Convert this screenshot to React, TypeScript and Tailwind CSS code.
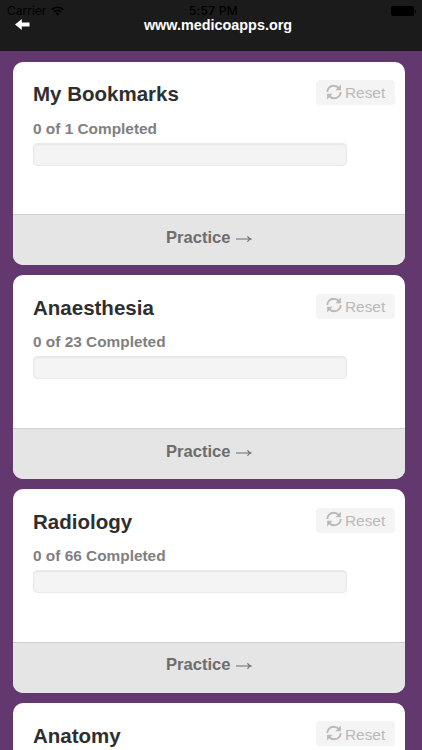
const subjects = [
  { name: 'My Bookmarks', done: 0, total: 1 },
  { name: 'Anaesthesia', done: 0, total: 23 },
  { name: 'Radiology', done: 0, total: 66 },
  { name: 'Anatomy', done: 0, total: 48 }
];

function WifiIcon() {
  return (
    <svg width="13" height="10" viewBox="0 0 13 10" fill="none" stroke="#000" strokeWidth="1.6">
      <path d="M0.7 3.6a8.2 8.2 0 0 1 11.6 0" />
      <path d="M2.9 5.9a5.1 5.1 0 0 1 7.2 0" />
      <path d="M6.5 9.6 4.4 7.5a3 3 0 0 1 4.2 0Z" fill="#000" stroke="none" />
    </svg>
  );
}

function RefreshIcon() {
  return (
    <svg width="16" height="16" viewBox="0 0 16 16" fill="none" stroke="#b9b9b9" strokeWidth="1.9" className="-mt-[2px]">
      <path d="M1.3 8C1.3 4.6 4 1.7 7.6 1.7c2.2 0 4 .9 5.3 2.5" />
      <path d="M14.7 8c0 3.4-2.7 6.3-6.3 6.3-2.2 0-4-.9-5.3-2.5" />
      <path d="M14.9 0.6v5.6H9.5Z" fill="#b9b9b9" stroke="none" />
      <path d="M1.1 15.4V9.8h5.4Z" fill="#b9b9b9" stroke="none" />
    </svg>
  );
}

function StatusBar() {
  return (
    <div className="grid h-[20px] grid-cols-3 items-center pt-[2px] pl-[7px] pr-[6px] font-['Inter',sans-serif] text-[12px] text-black">
      <div className="flex items-center gap-[5px]">
        <span>Carrier</span>
        <WifiIcon />
      </div>
      <span className="pl-[4px] text-center font-medium tracking-[0.3px]">5:57 PM</span>
      <div className="flex items-center justify-end gap-px">
        <div className="h-[10px] w-[23px] rounded-[2px] bg-black" />
        <div className="h-[3px] w-px bg-black" />
      </div>
    </div>
  );
}

function SubjectCard({ name, done, total }: { name: string; done: number; total: number }) {
  return (
    <div className="flex h-[203.8px] shrink-0 flex-col overflow-hidden rounded-[10px] bg-white">
      <div className="flex flex-1 items-start justify-between pl-[20.5px] pr-[10px]">
        <div className="pt-[19.9px]">
          <h2 className="text-[20.5px] leading-[25px] font-bold whitespace-nowrap text-[#2e2e2e]">{name}</h2>
          <p className="mt-[12.3px] text-[15.4px] leading-[20px] font-bold whitespace-nowrap text-[#808080]">
            {done} of {total} Completed
          </p>
          <div className="-mr-[60px] mt-[4px] h-[23px] w-[314px] overflow-hidden rounded-[4px] border border-[#e9e9e9] bg-[#f4f4f4] shadow-[inset_0_1px_2px_rgba(0,0,0,0.06)]">
            <div className="h-full bg-[#62386f]" style={{ width: `${(done / total) * 100}%` }} />
          </div>
        </div>
        <button
          type="button"
          className="mt-[18.5px] flex h-[25px] w-[79px] shrink-0 items-center gap-[3px] rounded-[4px] bg-[#f4f4f4] pl-[10px] text-[15.4px] text-[#b9b9b9]"
        >
          <RefreshIcon />
          <span className="pt-px">Reset</span>
        </button>
      </div>
      <button
        type="button"
        className="flex h-[51px] items-center justify-center gap-[5px] border-t border-[#cfcfcf] bg-[#e5e5e5] pb-[4px] text-[16.6px] font-bold text-[#6d6d6d]"
      >
        <span>Practice</span>
        <svg width="16" height="8" viewBox="0 0 16 8" fill="none" stroke="#6d6d6d" strokeWidth="1.1" className="mt-px">
          <path d="M0 4h14.5" />
          <path d="M11.5 1.2c.6 1.4 1.6 2.3 3.3 2.8-1.7.5-2.7 1.4-3.3 2.8" />
        </svg>
      </button>
    </div>
  );
}

export default function App() {
  return (
    <div className="h-screen overflow-hidden bg-[#62386f] font-['Liberation_Sans',Arial,sans-serif]">
      <header className="h-[51px] bg-[#1b1b1b]">
        <StatusBar />
        <div className="grid grid-cols-[60px_1fr_46px] items-center">
          <svg width="15" height="12" viewBox="0 0 15 12" fill="#fff" className="-mt-[4px] ml-[14.5px]">
            <path d="M0 5.5 6.8 0v3.5h7.7v4H6.8V11Z" />
          </svg>
          <h1 className="-mt-[3px] text-center text-[14.4px] leading-[16px] font-bold text-white">
            www.medicoapps.org
          </h1>
        </div>
      </header>
      <main className="flex flex-col gap-[10px] pt-[10.5px] pr-[17px] pl-[12.5px]">
        {subjects.map((s) => (
          <SubjectCard key={s.name} name={s.name} done={s.done} total={s.total} />
        ))}
      </main>
    </div>
  );
}
